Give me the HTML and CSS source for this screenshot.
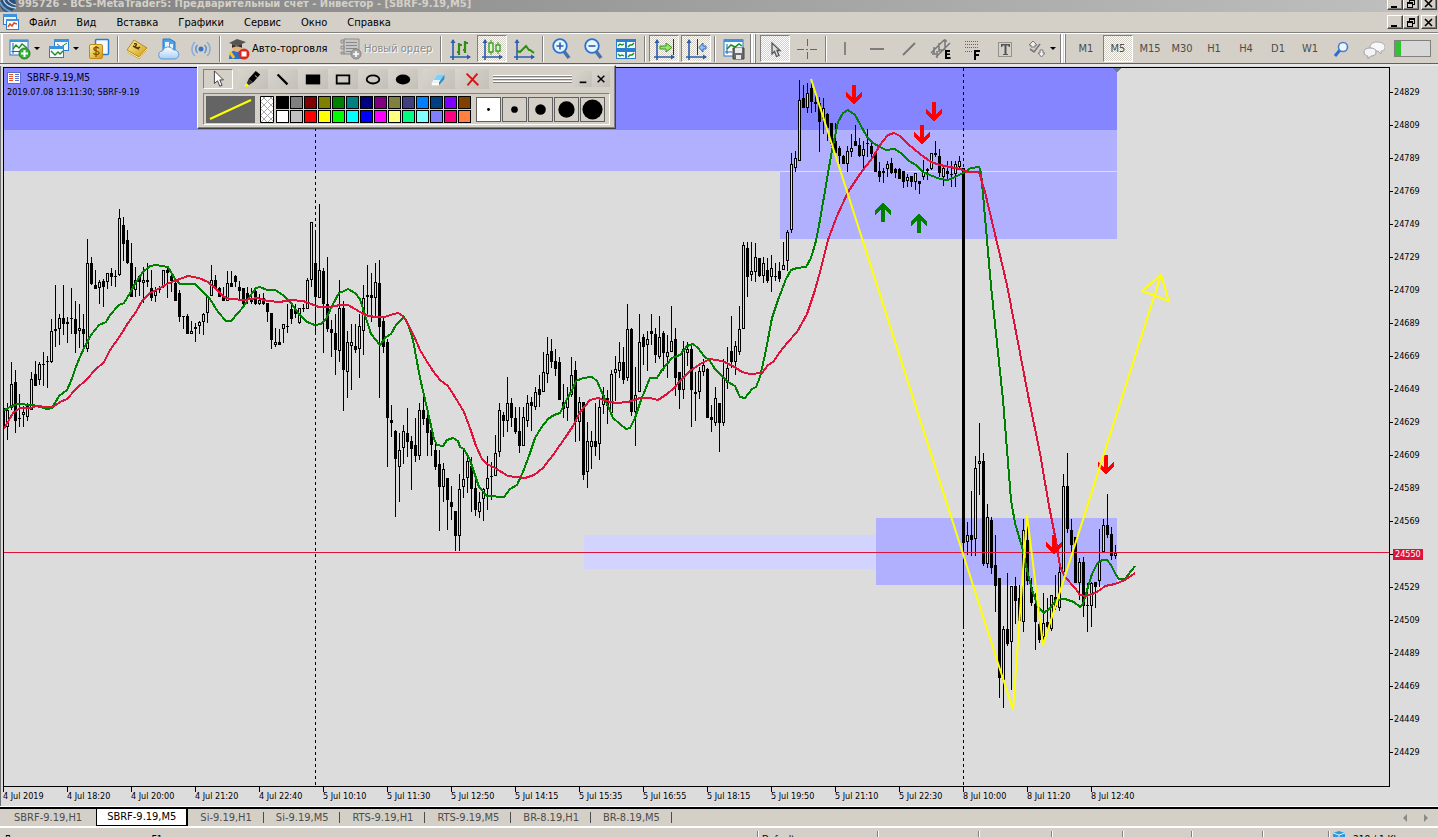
FILE: index.html
```html
<!DOCTYPE html>
<html lang="ru">
<head>
<meta charset="utf-8">
<title>BCS-MetaTrader5</title>
<link rel="stylesheet" href="styles.css">
</head>
<body>
<svg class="defs" aria-hidden="true">
  <defs>
    <linearGradient id="gold" x1="0" y1="0" x2="1" y2="1"><stop offset="0" stop-color="#fff0a0"/><stop offset="1" stop-color="#d09a10"/></linearGradient>
    <linearGradient id="cloud" x1="0" y1="0" x2="0" y2="1"><stop offset="0" stop-color="#fff"/><stop offset="1" stop-color="#a8cdf5"/></linearGradient>
    <g id="axes"><path d="M4 2v20M1 19h20" stroke="#2a5cb0" stroke-width="1.6" fill="none"/><path d="M1.500 5 4 1l2.500 4zM18 16.500l4 2.500-4 2.500z" fill="#2a5cb0"/></g>
    <path id="down" d="M-2-9H2V3L8-2V3L0 10-8 3V-2L-2 3z"/>
  </defs>
</svg>

<header class="titlebar">
  <svg class="app-logo" viewBox="0 0 16 16"><circle cx="8" cy="8" r="8" fill="#2d4f78"/><path d="M3 0c0 6 4 11 13 12M7 0c0 4 3 8 9 9" stroke="#b9d4ea" stroke-width="1.400" fill="none"/><path d="M0 6c2 5 6 8 11 10" stroke="#6c9cc8" stroke-width="2" fill="none"/></svg>
  <h1>995726 - BCS-MetaTrader5: Предварительный счет - Инвестор - [SBRF-9.19,M5]</h1>
  <div class="win-buttons">
    <button aria-label="Свернуть"><svg viewBox="0 0 12 11"><path d="M2 9h6" stroke="#000" stroke-width="2"/></svg></button>
    <button aria-label="Восстановить"><svg viewBox="0 0 12 11" shape-rendering="crispEdges"><path d="M4.500 4V1.500h5v5H8M2.500 4.500h5v5h-5zM3 5.500h4M5 2.500h4" stroke="#000" fill="none"/></svg></button>
    <button class="close" aria-label="Закрыть"><svg viewBox="0 0 12 11"><path d="M2 2l7 7M9 2 2 9" stroke="#000" stroke-width="1.600"/></svg></button>
  </div>
</header>

<nav class="menubar">
  <svg class="menu-logo" viewBox="0 0 16 16"><rect x=".5" y=".5" width="13" height="10" fill="#eaf5ff" stroke="#2b7ccc"/><path d="M0 0h14v3H0z" fill="#3a93dc"/><rect x="3.500" y="5.500" width="12" height="10" fill="#fff" stroke="#2b7ccc"/><path d="M3 5h13v2H3z" fill="#3a93dc"/><path d="M5 13l2-3 2 2 2-3 3 1" stroke="#e04a20" stroke-width="1.500" fill="none"/></svg>
  <a href="#">Файл</a><a href="#">Вид</a><a href="#">Вставка</a><a href="#">Графики</a><a href="#">Сервис</a><a href="#">Окно</a><a href="#">Справка</a>
  <div class="win-buttons">
    <button aria-label="Свернуть график"><svg viewBox="0 0 12 11"><path d="M2 9h6" stroke="#000" stroke-width="2"/></svg></button>
    <button aria-label="Восстановить график"><svg viewBox="0 0 12 11" shape-rendering="crispEdges"><path d="M4.500 4V1.500h5v5H8M2.500 4.500h5v5h-5zM3 5.500h4M5 2.500h4" stroke="#000" fill="none"/></svg></button>
    <button class="close" aria-label="Закрыть график"><svg viewBox="0 0 12 11"><path d="M2 2l7 7M9 2 2 9" stroke="#000" stroke-width="1.600"/></svg></button>
  </div>
</nav>

<div class="toolbar" role="toolbar">
  <button class="tool drop" aria-label="Новый график"><svg viewBox="0 0 22 22"><rect x="1" y="2" width="18" height="15" fill="#f4faff" stroke="#2b7ccc"/><path d="M1 2h18v2H1z" fill="#3a93dc"/><path d="M4 5v11M2.500 13.500h14" stroke="#2a5cb0"/><path d="M4 11l3-4 3 3 3-4 5 4" stroke="#1e8a1e" stroke-width="1.300" fill="none"/><circle cx="15.500" cy="15.500" r="5.500" fill="#35b035" stroke="#1e7d1e"/><path d="M15.500 12v7M12 15.500h7" stroke="#fff" stroke-width="2"/></svg><i class="caret"></i></button>
  <button class="tool drop" aria-label="Профили"><svg viewBox="0 0 22 22"><rect x="6.500" y="1.500" width="14" height="11" fill="#f4faff" stroke="#2b7ccc"/><path d="M6 1h15v3H6z" fill="#3a93dc"/><path d="M9 6l4 3 6-4" stroke="#1e8a1e" fill="none"/><rect x="1.500" y="8.500" width="14" height="11" fill="#f4faff" stroke="#2b7ccc"/><path d="M1 8h15v3H1z" fill="#3a93dc"/><path d="M3 13l4 4 3-3 2 2 3-3" stroke="#1e8a1e" stroke-width="1.300" fill="none"/></svg><i class="caret"></i></button>
  <button class="tool" aria-label="Обзор рынка"><svg viewBox="0 0 22 22"><rect x="7.500" y="1.500" width="13" height="15" rx="1" fill="#f4faff" stroke="#2b7ccc" stroke-width="1.500"/><rect x="1.500" y="6.500" width="13" height="14" rx="1.500" fill="url(#gold)" stroke="#c48a10"/><path d="M11 10.500c-1-2-6-1.500-5 1 .5 1.500 4.500 1.500 5 3 .5 2.500-4.500 3-5.500.5M8 8v11" stroke="#8a5200" stroke-width="1.300" fill="none"/></svg></button>
  <i class="sep"></i>
  <button class="tool" aria-label="Окно данных"><svg viewBox="0 0 22 22"><path d="M1 12 8 2l13 8-8 9z" fill="url(#gold)" stroke="#a87808" stroke-width=".8"/><path d="M1 12v2l12 7 8-9v-2l-8 9z" fill="#b8860b"/><path d="M1 13l12 7 8-9" stroke="#fff3bd" fill="none"/><path d="M8 6c2-1 3 0 2 1.500S9 10 11 10s3-1 3-1M7 8l6 3" stroke="#553a00" stroke-width="1.400" fill="none"/></svg></button>
  <button class="tool" aria-label="Облако"><svg viewBox="0 0 22 22"><path d="M5 1h7l5 3v9H5z" fill="#4ba3e6" stroke="#2b7ccc"/><path d="M7 4h4v8H7zM12 6h3v6h-3z" fill="#e7f4ff"/><path d="M5 21a4 4 0 0 1-.5-8 6 6 0 0 1 11-1A4.500 4.500 0 0 1 17 21z" fill="url(#cloud)" stroke="#5d98d6"/></svg></button>
  <button class="tool" aria-label="Сигналы"><svg viewBox="0 0 22 22"><circle cx="11" cy="11" r="2.500" fill="#3b73c4"/><path d="M7.500 7a5.500 5.500 0 0 0 0 8M14.500 7a5.500 5.500 0 0 1 0 8" stroke="#5c8fd0" stroke-width="1.500" fill="none"/><path d="M5 4a9.500 9.500 0 0 0 0 14M17 4a9.500 9.500 0 0 1 0 14" stroke="#8aaed8" stroke-width="1.500" fill="none"/></svg></button>
  <i class="sep"></i>
  <button class="tool wide auto"><svg viewBox="0 0 22 22"><path d="M1 21c0-6 3-9 8-9s8 4 8 9z" fill="#2f6fc4"/><circle cx="9" cy="9" r="5" fill="#e6b27c"/><path d="M1 5l8-4 9 3-8 4z" fill="#555"/><path d="M4 6v4c3-2 7-2 10 0V6l-5 2z" fill="#333"/><path d="M2 14l4 6" stroke="#f2c230" stroke-width="3"/><circle cx="16" cy="16" r="5.500" fill="#dc2a1c"/><rect x="13.500" y="13.500" width="5" height="5" fill="#fff"/></svg>Авто-торговля</button>
  <button class="tool wide order" disabled><svg viewBox="0 0 22 22"><path d="M4 1h15v15H4zM1 2h3v3H1zM1 8h3v3H1zM1 14h3v2H1z" fill="#c7c7c7" stroke="#8c8c8c"/><path d="M6 4.500h11M6 7.500h11M6 10.500h11M6 13.500h6" stroke="#888"/><circle cx="16" cy="16" r="5" fill="#a4a4a4" stroke="#858585"/><path d="M16 13v6M13 16h6" stroke="#fff" stroke-width="1.600"/></svg>Новый ордер</button>
  <i class="sep"></i>
  <button class="tool" aria-label="Бары"><svg viewBox="0 0 22 22"><use href="#axes"/><path d="M10 5v12M16 3v12M8 14h2M10 7h3M14 12h2M16 5h3" stroke="#2f8f10" stroke-width="2.200" fill="none"/></svg></button>
  <button class="tool pressed" aria-label="Свечи"><svg viewBox="0 0 22 22"><use href="#axes"/><path d="M10 2v15M17 4v12" stroke="#2f9a10"/><rect x="8" y="5" width="4" height="9" fill="#e6f8dc" stroke="#2f9a10" stroke-width="1.300"/><rect x="15" y="7" width="4" height="6" fill="#e6f8dc" stroke="#2f9a10" stroke-width="1.300"/></svg></button>
  <button class="tool" aria-label="Линия"><svg viewBox="0 0 22 22"><use href="#axes"/><path d="M4 13l3 1 6-6 3 4 1 0 4 3" stroke="#2f8f10" stroke-width="2" fill="none"/></svg></button>
  <i class="sep"></i>
  <button class="tool" aria-label="Увеличить"><svg viewBox="0 0 22 22"><path d="M12 12l6 8" stroke="#4c6fa8" stroke-width="3.600"/><circle cx="9" cy="8" r="6.800" fill="#e8f5ff" stroke="#2a74c8" stroke-width="1.800"/><path d="M9 4.500v7M5.500 8h7" stroke="#2a5cb0" stroke-width="1.600"/></svg></button>
  <button class="tool" aria-label="Уменьшить"><svg viewBox="0 0 22 22"><path d="M12 12l6 8" stroke="#4c6fa8" stroke-width="3.600"/><circle cx="9" cy="8" r="6.800" fill="#e8f5ff" stroke="#2a74c8" stroke-width="1.800"/><path d="M5.500 8h7" stroke="#2a5cb0" stroke-width="1.600"/></svg></button>
  <button class="tool" aria-label="Плитка"><svg viewBox="0 0 22 22"><path d="M1 1h20v20H1z" fill="#2b7fd0"/><path d="M2 4h8v6H2zM12 4h8v6h-8zM2 14h8v6H2zM12 14h8v6h-8z" fill="#f2faff"/><path d="M3 8l2-2 2 1 2-1M13 9l2-2 2 0 2-2M3 16l2 2 2-1 2 1M13 19l2-2 2 0 2-2" stroke="#1e8a1e" stroke-width="1.300" fill="none"/></svg></button>
  <i class="sep"></i>
  <button class="tool pressed" aria-label="Автопрокрутка"><svg viewBox="0 0 22 22"><use href="#axes"/><path d="M20.500 1v16" stroke="#333"/><path d="M7 8h6V5l6 4.500-6 4.500v-3H7z" fill="#9be07a" stroke="#2f9a10"/></svg></button>
  <button class="tool pressed" aria-label="Сдвиг графика"><svg viewBox="0 0 22 22"><use href="#axes"/><path d="M12.500 1v16" stroke="#333"/><path d="M21 8h-3V5l-4 4.500 4 4.500v-3h3z" fill="#8fc1f5" stroke="#2a6cc8"/></svg></button>
  <i class="sep"></i>
  <button class="tool" aria-label="Шаблоны"><svg viewBox="0 0 22 22"><rect x="1" y="2" width="19" height="16" fill="#f4faff" stroke="#2b7ccc"/><path d="M1 1h19v3H1z" fill="#3a93dc"/><path d="M4 6v10M2 14h7" stroke="#2a5cb0"/><path d="M4 11l4-4 4 2 4-3 3 2" stroke="#1e8a1e" stroke-width="1.500" fill="none"/><path d="M10 10h11v11H10z" fill="#6b6b6b" stroke="#444"/><path d="M12 10h7v5h-7zM13 17h5v4h-5z" fill="#e9e9e9"/></svg></button>
  <i class="grip"></i>
  <button class="tool pressed" aria-label="Курсор"><svg viewBox="0 0 22 22"><path d="M8 5v11l2.500-2.500 2 5 2.500-1-2-5H16z" fill="#ddd" stroke="#555" stroke-width="1.300"/></svg></button>
  <button class="tool" aria-label="Перекрестие"><svg viewBox="0 0 22 22" shape-rendering="crispEdges"><path d="M11 1v7M11 14v7M1 11h7M14 11h7M10 11h2" stroke="#666" stroke-width="1"/></svg></button>
  <i class="sep"></i>
  <button class="tool" aria-label="Вертикальная линия"><svg viewBox="0 0 22 22"><path d="M11 4v13" stroke="#666" stroke-width="1.400"/></svg></button>
  <button class="tool" aria-label="Горизонтальная линия"><svg viewBox="0 0 22 22"><path d="M4 11h14" stroke="#666" stroke-width="1.600"/></svg></button>
  <button class="tool" aria-label="Трендовая линия"><svg viewBox="0 0 22 22"><path d="M5 17 17 5" stroke="#777" stroke-width="1.800"/></svg></button>
  <button class="tool" aria-label="Каналы"><svg viewBox="0 0 22 22"><path d="M1 15 14 2M6 19 20 5M4 9v7M2 16h4M9 5v9M9 12h5M15 1v11M13 3h4M7 13v7" stroke="#777" stroke-width="1.500" fill="none"/><path d="M15 12h5v2h-3v1.500h3v1.500h-3v2h3.500v2H15z" fill="#000"/></svg></button>
  <button class="tool" aria-label="Фибоначчи"><svg viewBox="0 0 22 22" shape-rendering="crispEdges"><path d="M3 3.500h13M3 6.500h13M3 9.500h13M3 13.500h8" stroke="#666" stroke-width="1" stroke-dasharray="1 1"/><path d="M12 12h6v2h-4v2h3v2h-3v4h-2z" fill="#000"/></svg></button>
  <button class="tool" aria-label="Текст"><svg viewBox="0 0 22 22"><rect x="4.500" y="4.500" width="13" height="14" fill="none" stroke="#555" stroke-dasharray="1 1"/><path d="M7 6h9v3h-1l-1-1.500h-1.500V16H14v1H9v-1h1.500V7.500H9L8 9H7z" fill="#555"/></svg></button>
  <button class="tool drop" aria-label="Фигуры"><svg viewBox="0 0 22 22"><path d="M4 7l4-4 4 4h-2v2H6V7zM13 15h2v-3h3v3h2l-3.500 4z" fill="#eee" stroke="#777"/><path d="M5 11l4 3 6-8" stroke="#777" stroke-width="1.600" fill="none"/></svg><i class="caret"></i></button>
  <i class="grip far"></i>
  <button class="tool tf">M1</button><button class="tool tf pressed">M5</button><button class="tool tf">M15</button><button class="tool tf">M30</button><button class="tool tf">H1</button><button class="tool tf">H4</button><button class="tool tf">D1</button><button class="tool tf">W1</button>
  <button class="tool" aria-label="Поиск"><svg viewBox="0 0 22 22"><path d="M9 12l-5 6" stroke="#2a6cd0" stroke-width="3"/><circle cx="12" cy="9" r="4.500" fill="#eef6ff" stroke="#4a7cd0" stroke-width="1.600"/></svg></button>
  <button class="tool" aria-label="Чат"><svg viewBox="0 0 22 22"><path d="M14 4c5 0 8 2 8 5s-2 4-4 4l0 3-3-3c-5 0-8-1-8-4s3-5 7-5z" fill="#f8f8fa" stroke="#a9a9ae"/><path d="M7 10c4 0 6 1 6 4s-2 4-5 4l-3 3v-3c-2 0-4-1-4-4s3-4 6-4z" fill="#f4f4f6" stroke="#a0a0a6"/></svg></button>
  <div class="signal"><i></i></div>
</div>

<main class="chart">
  <div class="plot">
    <svg id="price-plot" viewBox="4 68 1385 718" preserveAspectRatio="none" shape-rendering="crispEdges">
      <path fill="#8585ff" d="M4 68h1113v62H4z"/>
      <path fill="#b0b0ff" d="M4 130h1113v41H4zM780 171h337v68H780zM876 518h241v67H876z"/>
      <path fill="#d3d3ff" d="M584 535h292v34H584z"/>
      <path fill="#dcdcff" d="M780 171h337v1H780z"/>
      <path fill="#708090" d="M1112 68h9l-4 4z"/>
      <path class="day" d="M315.500 68V786M963.500 68V786"/>
      <path id="wicks" class="wick"/><path id="filled"/><path id="hollow" class="hollow"/>
      <path fill="#000" d="M962 168h3v375h-3zM963 543h1v84h-1z"/>
      <path class="level" d="M4 552.500H1389"/>
      <polyline class="ma fast" points="3,411 10,407 17,404 33,405 40,407 47,409 52,408 59,396 67,390 71,381 77,364 84,348 91,335 99,325 106,322 110,315 119,305 124,303 130,293 136,282 143,272 150,266 156,265 168,267 175,279 180,284 195,284 202,291 210,299 218,312 226,321 231,321 238,313 244,306 250,296 256,288 260,287 267,290 275,290 283,295 291,303 299,314 307,322 315,325 321,324 326,319 332,306 339,293 344,291 348,289 355,293 360,299 364,312 371,334 380,345 386,337 391,334 396,325 404,317 408,324 413,340 420,378 427,408 434,439 437,445 443,446 447,440 453,438 458,441 460,447 464,449 470,460 475,475 479,487 487,496 504,497 510,489 517,485 523,472 529,456 535,438 541,428 548,419 554,415 560,413 566,401 572,390 576,381 583,378 592,377 597,381 603,395 608,406 613,418 620,424 626,429 630,428 635,418 641,400 650,378 657,378 662,370 672,358 680,355 687,346 693,344 698,348 704,356 710,361 715,369 722,376 728,382 735,386 740,397 745,398 752,389 756,387 760,377 766,350 772,318 778,300 786,279 791,270 797,268 806,267 811,258 816,241 820,220 826,185 832,150 838,122 843,113 848,110 855,115 860,124 867,137 873,143 880,147 886,150 895,149 902,154 909,161 916,165 923,172 930,175 940,179 948,180 955,177 963,173 971,168 979,167 981,172 987,240 991,286 1003,400 1011,500 1015,523 1022,547 1027,570 1032,590 1038,607 1044,613 1050,608 1056,600 1065,599 1074,602 1080,607 1083,604 1087,590 1092,574 1097,564 1102,560 1107,560 1111,565 1116,575 1119,579 1125,579 1135,566"/>
      <polyline class="ma slow" points="3,430 9,420 13,413 20,408 30,408 37,406 46,407 53,407 60,402 67,399 75,390 87,379 95,370 104,362 110,350 120,336 128,323 136,312 142,301 150,293 160,288 167,284 177,280 188,276 199,278 208,282 216,289 224,297 230,299 245,300 257,298 268,301 280,302 290,300 303,301 311,304 319,307 330,307 340,305 348,305 355,309 365,315 375,317 385,317 390,315 398,313 403,316 409,326 414,336 420,350 426,360 433,371 440,380 448,386 455,397 464,412 470,428 476,446 482,459 487,464 495,468 508,476 525,478 534,475 543,468 553,455 565,438 573,426 580,412 590,400 598,398 606,401 616,403 628,402 640,398 650,398 658,400 667,394 674,388 681,380 690,371 700,364 710,359 722,361 733,366 742,372 750,374 762,373 768,365 773,362 780,352 788,342 797,332 807,314 815,290 820,272 828,240 837,216 848,192 860,174 873,157 880,145 888,135 894,133 900,136 908,144 920,154 931,162 940,165 950,167 960,169 968,172 979,172 985,192 1007,285 1029,400 1040,453 1049,506 1056,541 1060,566 1065,577 1075,588 1080,595 1086,596 1095,593 1100,590 1105,586 1115,584 1125,580 1135,573"/>
      <g fill="#f00"><use href="#down" x="854" y="94"/><use href="#down" x="922" y="134"/><use href="#down" x="934" y="111"/><use href="#down" x="1106" y="464"/><use href="#down" x="1054" y="544"/></g>
      <g fill="#008000"><use href="#down" transform="translate(883 213) scale(1 -1)"/><use href="#down" transform="translate(919 224) scale(1 -1)"/></g>
      <path class="zigzag" shape-rendering="geometricPrecision" d="M811 79 1013 710 1027 515 1043 645 1161 275M1161 275 1142 291 1169 301z"/>
    </svg>
    <div class="caption">
      <p><svg viewBox="0 0 14 12"><rect x=".5" y=".5" width="13" height="11" fill="#fff" stroke="#5a6fc0"/><path d="M2 2.500h4M2 4.500h4M2 6.500h4M2 8.500h4" stroke="#e05030"/><path d="M8 2.500h4M8 4.500h4M8 6.500h4M8 8.500h4" stroke="#5a6fd0"/></svg>SBRF-9.19,M5</p>
      <p class="stamp">2019.07.08 13:11:30; SBRF-9.19</p>
    </div>
  </div>
  <ol class="prices" id="prices"></ol>
  <ol class="times" id="times"></ol>
</main>

<nav class="tabs">
  <a href="#" class="first">SBRF-9.19,H1</a><a href="#" class="active">SBRF-9.19,M5</a><a href="#">Si-9.19,H1</a><a href="#">Si-9.19,M5</a><a href="#">RTS-9.19,H1</a><a href="#">RTS-9.19,M5</a><a href="#">BR-8.19,H1</a><a href="#">BR-8.19,M5</a>
  <div class="scrollers"><button aria-label="Назад"><svg viewBox="0 0 4 8"><path d="M4 0v8L0 4z" fill="#8c8984"/></svg></button><button aria-label="Вперед"><svg viewBox="0 0 4 8"><path d="M0 0v8l4-4z" fill="#8c8984"/></svg></button></div>
</nav>

<footer class="status">
  <span class="help">Для вызова справки, нажмите F1</span><span>Default</span><span></span><span></span><span></span><span></span><span></span><span></span><span class="net"><svg viewBox="0 0 12 12"><path d="M0 2l6-2 6 2v8l-6 2-6-2z" fill="#2a9be0"/><path d="M0 2l6 2 6-2M6 4v8" stroke="#d5f0ff" fill="none"/></svg>218 / 1 Kb</span>
</footer>

<section class="palette" aria-label="Рисование">
  <div class="palette-top">
    <button class="on" aria-label="Указатель"><svg viewBox="0 0 20 20"><path d="M6 1v14l3.500-3 2.500 6 2.500-1-2.500-6H16z" fill="#fff" stroke="#333"/></svg></button>
    <button aria-label="Маркер"><svg viewBox="0 0 20 20"><path d="M13 1l5 4-8 9-5-4z"/><path d="M5 10l5 4-5 3-2-2z" fill="#333"/><path d="M12 6l3 2.500" stroke="#ddd"/><circle cx="3" cy="17" r="2" fill="#ff0"/></svg></button>
    <button aria-label="Линия"><svg viewBox="0 0 20 20"><path d="M4 5l11 11" stroke="#000" stroke-width="2.500"/></svg></button>
    <button aria-label="Закрашенный прямоугольник"><svg viewBox="0 0 20 20"><path d="M2 5h16v11H2z"/></svg></button>
    <button aria-label="Прямоугольник"><svg viewBox="0 0 20 20"><path d="M3 6h14v9H3z" fill="none" stroke="#000" stroke-width="2"/></svg></button>
    <button aria-label="Эллипс"><svg viewBox="0 0 20 20"><ellipse cx="10" cy="10.500" rx="7" ry="4.500" fill="none" stroke="#000" stroke-width="2"/></svg></button>
    <button aria-label="Закрашенный эллипс"><svg viewBox="0 0 20 20"><ellipse cx="10" cy="10.500" rx="8" ry="5.500"/></svg></button>
    <button class="apart" aria-label="Ластик"><svg viewBox="0 0 20 20"><path d="M8 5h8l-6 9H2z" fill="#e8f7ff"/><path d="M8 5h8l-4 6H4z" fill="#7fd0f5"/><path d="M16 5v5l-6 7v-3z" fill="#2b8ec8"/><path d="M2 14h8v3H2z" fill="#fff"/></svg></button>
    <button aria-label="Очистить"><svg viewBox="0 0 20 20"><path d="M4 4l13 13M16 4 5 17" stroke="#d01818" stroke-width="2.200"/></svg></button>
    <i class="rails"></i>
    <button class="small" aria-label="Свернуть панель"><svg viewBox="0 0 12 12"><path d="M2 10h8" stroke="#000" stroke-width="2"/></svg></button>
    <button class="small" aria-label="Закрыть панель"><svg viewBox="0 0 12 12"><path d="M2 2l8 8M10 2l-8 8" stroke="#000" stroke-width="1.800"/></svg></button>
  </div>
  <div class="palette-body">
    <svg class="sample" viewBox="0 0 49 27"><path d="M0 0h49v27H0z" fill="#646464"/><path d="M4 23 45 4" stroke="#ff0" stroke-width="2"/></svg>
    <svg class="hatch" viewBox="0 0 14 27"><path d="M.5.500h13v26H.5z" fill="#fff" stroke="#000"/><path d="M1 5l4-4M1 12l11-11M1 19l12-12M1 26l12-12M8 26l5-5M1 20l6 6M1 13l12 12M1 6l12 12M3 1l10 10M10 1l3 3" stroke="#aaa" fill="none"/></svg>
    <div class="swatches" id="swatches"></div>
    <div class="sizes">
      <button class="chosen" aria-label="Толщина 1"><svg viewBox="0 0 24 24"><circle cx="12" cy="12" r="1.500"/></svg></button>
      <button aria-label="Толщина 2"><svg viewBox="0 0 24 24"><circle cx="12" cy="12" r="3.500"/></svg></button>
      <button aria-label="Толщина 3"><svg viewBox="0 0 24 24"><circle cx="12" cy="12" r="5.500"/></svg></button>
      <button aria-label="Толщина 4"><svg viewBox="0 0 24 24"><circle cx="12" cy="12" r="8.500"/></svg></button>
      <button aria-label="Толщина 5"><svg viewBox="0 0 24 24"><circle cx="12" cy="12" r="10.500"/></svg></button>
    </div>
  </div>
</section>
<script src="chart.js"></script>
</body>
</html>
```
FILE: styles.css
```css
* { box-sizing: border-box; }
body {
  margin: 0; height: 100vh; overflow: hidden; position: relative;
  display: flex; flex-direction: column;
  background: #d4d0c8; color: #000;
  font: 11px/14px "DejaVu Sans Condensed", "DejaVu Sans", sans-serif;
}
button { font: inherit; color: inherit; padding: 0; margin: 0; border: 0; background: none; display: flex; align-items: center; justify-content: center; }
a { color: inherit; text-decoration: none; }
svg { display: block; }
ol, p, h1 { margin: 0; padding: 0; list-style: none; }
.defs { position: absolute; width: 0; height: 0; }

.titlebar { flex: none; height: 12px; overflow: hidden; display: flex; align-items: flex-end; padding-right: 1px; background: linear-gradient(90deg, #808080, #c0c0c0); color: #d4d0c8; }
.titlebar h1 { font-size: 11px; line-height: 16px; font-weight: bold; white-space: nowrap; margin-left: 2px; }
.app-logo { width: 16px; height: 16px; flex: none; }
.win-buttons { display: flex; margin-left: auto; }
.win-buttons button { width: 16px; height: 14px; background: #d4d0c8; border: 1px solid; border-color: #fff #404040 #404040 #fff; box-shadow: inset -1px -1px #808080; }
.win-buttons svg { width: 12px; height: 11px; }
.win-buttons .close { margin-left: 2px; }
.titlebar .win-buttons { margin-bottom: 2px; }

.menubar { flex: none; height: 21px; display: flex; align-items: center; padding: 0 1px 0 3px; border-bottom: 1px solid #808080; }
.menu-logo { width: 16px; height: 16px; flex: none; }
.menubar a { padding: 1px 10px 0; }

.toolbar { flex: none; height: 31px; display: flex; align-items: center; padding-left: 5px; border-top: 1px solid #fff; border-bottom: 1px solid #808080; box-shadow: inset 1px 0 #d4d0c8, inset 3px 0 #fff; }
.tool { flex: none; width: 32px; height: 28px; }
.tool svg { width: 22px; height: 22px; flex: none; }
.tool.drop { width: 39px; }
.tool.drop svg { margin-right: 3px; }
.caret { border: 3px solid transparent; border-top-color: #000; border-bottom: 0; }
.tool.wide { gap: 2px; justify-content: flex-start; padding-left: 5px; white-space: nowrap; }
.tool.auto { width: 112px; }
.tool.order { width: 103px; color: #8c8984; text-shadow: 1px 1px #fff; }
.tool.pressed { width: 30px; height: 27px; margin: 0 1px; border: 1px solid; border-color: #808080 #fff #fff #808080; background: repeating-conic-gradient(#fff 0 25%, #d4d0c8 0 50%) 0 0 / 2px 2px; }
.tf { color: #4c4c4c; }
.sep { flex: none; width: 6px; height: 26px; background: linear-gradient(90deg, #808080 50%, #fff 50%) 2px 0 / 2px 100% no-repeat; }
.grip { flex: none; width: 9px; height: 30px; border-left: 1px solid #808080; box-shadow: inset 2px 0 #fff; background: linear-gradient(90deg, #fff 50%, #808080 50%) 3px 0 / 2px 100% no-repeat; }
.grip.far { width: 10px; }
.signal { flex: 1; max-width: 37px; height: 17px; margin-left: 4px; border: 1px solid #808080; background: #d8d8d8; }
.signal i { display: block; width: 6px; height: 100%; background: #32c132; }

.chart { flex: 1; min-height: 0; display: grid; grid-template: minmax(0, 1fr) 20px / minmax(0, 1fr) 48px; background: #dcdcdc; border-top: 2px solid #e8e8e8; box-shadow: inset 1px 0 #707070; padding: 1px 0 0 3px; font-size: 9px; line-height: 11px; outline: 1px solid #606060; }
.plot { position: relative; border: 1px solid #000; }
.plot > svg { width: 100%; height: 100%; position: absolute; }
.caption { position: absolute; left: 3px; top: 2px; font-size: 10px; line-height: 15px; }
.caption p { display: flex; align-items: center; white-space: nowrap; }
.caption .stamp { font-size: 9px; }
.caption svg { width: 14px; height: 12px; margin-right: 6px; }
.day { stroke: #000; stroke-dasharray: 3 3; }
.wick { stroke: #000; }
.hollow { stroke: #000; fill: #dcdcdc; }
.level { stroke: #dc143c; }
.ma { fill: none; stroke-width: 2; }
.fast { stroke: #008000; }
.slow { stroke: #dc143c; }
.zigzag { fill: none; stroke: #ff0; stroke-width: 2; }
.prices { display: flex; flex-direction: column; padding: 9px 0 18px; }
.prices li { flex: 1; display: flex; align-items: center; white-space: nowrap; }
.prices li::before { content: ""; width: 3px; height: 1px; background: #000; margin-right: 1px; }
.prices .last span { background: #dc143c; color: #fff; padding: 0 2px; margin-left: -1px; }
.times { grid-column: 1 / -1; display: flex; }
.times li { flex: 0 0 64px; padding-top: 4px; white-space: nowrap; background: linear-gradient(#000, #000) 0 0 / 1px 5px no-repeat; }

.tabs { flex: none; height: 20px; display: flex; border-top: 2px solid #000; border-bottom: 1px solid #fff; outline: 1px solid #fff; line-height: 17px; color: #4c4c4c; }
.tabs a { padding: 0 12px; position: relative; white-space: nowrap; }
.tabs a::after { content: ""; position: absolute; right: 0; top: 3px; height: 11px; width: 1px; background: #4c4c4c; }
.tabs .first { padding: 0 14px; }
.tabs .first::after, .tabs .active::after { display: none; }
.tabs .active { height: 17px; line-height: 16px; background: #fff; color: #000; border: solid #000; border-width: 0 2px 1px 1px; padding: 0 10px; }
.scrollers { display: flex; gap: 17px; margin-left: auto; padding: 3px 10px 0 0; height: 14px; }
.scrollers svg { width: 4px; height: 8px; }

.status { flex: none; height: 9px; margin-top: 1px; overflow: hidden; display: grid; grid-template-columns: 757fr 120fr 101fr 73fr 71fr 69fr 71fr 66fr 110fr; line-height: 12px; padding-top: 3px; font-size: 10px; }
.status span { min-width: 0; border-left: 1px solid #808080; box-shadow: inset 1px 0 #fff; padding: 3px 0 0 4px; white-space: nowrap; height: 15px; }
.status .help { border: 0; box-shadow: none; }
.status .net { display: flex; gap: 8px; }
.status .net svg { width: 12px; height: 12px; margin-top: -3px; flex: none; }

.palette { position: absolute; left: 197px; top: 65px; padding: 3px 5px 3px; background: #d4d0c8; border: 1px solid; border-color: #fff #404040 #404040 #fff; box-shadow: inset -1px -1px #808080; }
.palette-top { display: flex; align-items: flex-start; height: 24px; }
.palette-top button { width: 30px; height: 20px; background: linear-gradient(135deg, #d8d5ce, #c4c0b8); }
.palette-top button.on { margin-right: 5px; background: #d4d0c8; border: 1px solid; border-color: #808080 #fff #fff #808080; }
.palette-top svg { width: 18px; height: 18px; }
.palette-top .apart { margin-left: 5px; width: 32px; }
.palette-top .apart + button { width: 34px; }
.rails { flex: 1; height: 8px; margin: 6px 2px 0 4px; background: repeating-linear-gradient(#fff 0 1px, #808080 1px 2px, #d4d0c8 2px 3px); }
.palette-top .small { width: 18px; height: 16px; margin-top: 2px; }
.palette-top .small svg { width: 10px; height: 10px; }
.palette-body { display: flex; align-items: center; padding: 2px 4px 2px 2px; height: 32px; border: 1px solid; border-color: #808080 #fff #fff #808080; }
.sample { width: 49px; height: 27px; }
.hatch { width: 14px; height: 27px; margin: 0 2px 0 5px; }
.swatches { display: grid; grid-template-columns: repeat(14, 13px); gap: 1px; }
.swatches button { width: 13px; height: 13px; border: 1px solid #000; }
.sizes { display: flex; gap: 1px; margin-left: 5px; }
.sizes button { width: 25px; height: 25px; border: 1px solid #606060; }
.sizes .chosen { background: #fff; }
.sizes svg { width: 23px; height: 23px; }
```
FILE: chart.js
```js
// One entry per bar: high, body top, body bottom, low, kind (f = falling, h = rising).
const bars = `403 408 427 432 h|403 410 427 440 h|362 384 408 410 h|370 382 421 433 f|394 418 419 427 f|406 412 415 427 h|403 406 417 421 h|372 379 410 410 h|361 374 386 386 f|362 364 380 385 h|352 364 365 386 f|356 361 362 388 f|319 331 362 363 h|285 329 331 347 h|314 318 329 345 h|285 318 324 335 f|317 322 324 343 h|288 318 319 334 f|301 319 334 353 f|304 328 331 348 h|314 329 334 351 f|239 263 349 352 h|257 263 284 285 f|270 285 289 289 f|280 282 288 304 h|279 281 287 307 f|273 273 282 289 h|268 273 277 286 f|270 276 277 287 f|209 218 275 276 h|217 225 244 261 f|230 240 263 264 f|243 263 297 297 f|267 280 290 297 h|275 276 282 296 f|267 280 283 303 h|263 280 282 287 f|270 288 298 301 f|287 291 296 302 h|286 288 290 293 h|270 270 287 288 h|268 270 273 298 f|275 276 281 292 f|282 283 301 301 f|290 293 317 322 f|316 316 317 329 f|314 316 334 334 f|321 331 334 334 h|323 327 329 342 h|321 322 326 334 h|313 314 322 335 h|295 296 313 323 h|265 280 296 296 h|275 280 288 289 f|287 288 297 297 f|287 296 301 301 f|271 283 301 301 h|271 283 287 287 f|275 276 282 287 f|281 287 291 299 f|288 288 304 305 f|287 293 299 304 f|288 298 302 304 f|288 291 304 305 f|294 300 304 305 h|293 298 304 305 f|303 303 312 322 f|313 313 340 349 f|328 342 345 347 h|329 342 345 345 f|324 324 329 343 h|304 326 327 333 f|304 309 319 324 f|304 309 314 318 f|308 308 323 324 h|304 308 309 312 f|278 280 309 309 h|222 222 280 287 h|233 263 297 333 f|204 270 298 298 h|268 271 304 353 f|257 304 329 332 f|320 329 333 357 f|314 333 350 375 f|280 308 351 362 h|301 308 370 411 f|331 342 372 398 h|324 342 346 390 h|324 346 350 353 f|314 326 349 378 h|285 298 331 355 h|265 295 297 316 f|273 295 298 322 f|263 282 298 317 h|260 283 327 398 f|317 321 347 353 f|339 342 418 467 f|405 420 423 437 f|430 431 459 517 f|433 450 467 502 h|425 431 448 464 h|408 433 442 457 f|436 441 449 490 f|418 445 456 462 f|403 410 456 460 h|393 410 419 425 f|414 418 433 456 f|429 430 445 456 f|443 450 467 470 f|450 464 487 531 f|463 469 487 502 h|478 478 500 530 f|486 502 507 520 f|511 511 536 551 f|474 489 536 551 h|449 479 487 498 h|453 461 478 493 h|457 466 489 512 f|473 488 510 516 f|492 502 512 518 h|488 489 499 521 h|456 478 489 510 h|462 476 477 500 f|435 453 476 476 h|403 410 452 457 h|412 415 421 437 f|377 403 421 432 h|398 403 418 427 f|407 418 432 434 f|407 431 446 453 f|407 417 446 446 h|395 403 421 427 h|397 402 406 431 f|387 392 407 410 h|375 389 395 407 f|352 372 392 392 h|337 354 374 383 h|339 351 362 368 f|349 361 369 376 f|357 362 400 400 f|384 402 409 418 f|387 398 408 421 h|357 375 395 397 h|361 370 422 442 f|397 402 422 441 h|402 402 475 480 f|422 441 472 488 h|431 441 447 469 h|403 441 447 456 f|400 407 444 460 h|387 395 405 414 h|390 398 406 424 f|370 374 413 413 h|356 369 373 401 h|342 362 371 378 h|347 362 380 384 f|304 329 378 381 h|328 329 412 416 f|367 395 412 446 h|314 342 392 392 h|334 337 347 365 f|331 339 345 371 h|314 331 334 345 f|328 334 355 363 f|316 337 357 359 h|331 333 353 371 f|335 352 357 378 h|306 341 352 352 h|328 339 378 396 f|372 372 390 409 f|341 349 390 399 h|342 349 353 366 h|346 349 390 427 f|372 392 394 421 h|367 371 392 399 h|359 365 372 376 h|368 369 418 418 f|405 417 420 432 f|387 398 423 426 h|403 403 423 452 f|359 378 423 426 h|347 368 383 389 h|316 351 362 368 f|341 346 362 375 h|306 329 352 355 h|242 245 329 329 h|242 248 277 297 f|242 271 275 281 h|243 257 272 282 h|258 258 276 277 f|257 263 276 283 h|258 270 281 283 f|255 268 277 292 h|263 276 277 281 f|262 271 279 282 f|242 265 270 270 h|230 232 261 271 h|153 164 230 233 h|151 158 168 172 h|80 100 161 161 h|85 98 108 108 f|83 93 108 113 h|79 88 102 113 f|94 102 104 112 f|97 103 122 152 f|98 108 119 134 h|113 114 128 141 f|123 123 144 147 f|123 141 153 158 f|146 148 156 164 f|155 156 164 164 f|146 151 164 172 h|134 148 152 157 h|125 141 146 146 f|138 145 156 157 f|141 149 156 168 h|129 143 144 157 f|140 146 154 158 f|151 153 172 172 f|162 171 177 182 f|168 171 173 183 f|161 164 169 177 h|158 163 173 174 f|168 169 173 178 f|168 169 179 179 f|171 171 182 188 f|174 177 181 187 h|176 176 182 187 f|173 173 182 190 h|181 181 184 194 f|160 172 177 180 h|168 169 171 180 h|153 153 169 170 h|141 153 155 157 f|149 156 173 177 f|165 168 177 186 h|161 171 174 179 f|161 174 175 187 f|161 164 174 187 h|156 161 167 169 h|168 168 543 627 f|522 535 542 555 h|491 535 540 556 f|456 468 539 556 h|423 461 464 495 h|453 461 564 566 f|504 517 564 568 h|517 520 568 574 f|535 565 586 612 f|578 578 678 698 f|626 629 680 708 h|573 629 644 646 f|586 586 642 690 h|577 586 601 624 f|585 598 621 621 f|519 530 622 632 h|520 540 581 585 f|578 587 603 606 f|593 604 622 650 f|607 624 640 643 f|593 623 637 643 h|598 622 627 631 f|595 595 629 631 h|575 597 607 610 f|562 572 608 611 h|474 486 572 575 h|453 486 529 533 f|519 530 545 552 f|537 537 583 583 f|558 562 583 600 h|557 562 606 617 f|583 605 606 632 f|582 583 606 627 h|582 582 587 608 f|529 562 581 587 h|519 525 552 552 h|494 525 535 538 f|527 534 556 560 f|545 553 556 559 h`;

const firstX = 3, stepX = 4;
let wicks = "", filled = "", hollow = "";
bars.split("|").forEach((bar, i) => {
  const [high, top, bottom, low, kind] = bar.split(" ");
  const x = firstX + stepX * i;
  wicks += `M${x + 0.5} ${high}V${low}`;
  const height = Math.max(1, bottom - top);
  if (kind === "f") filled += `M${x - 1} ${top}h3v${height}h-3z`;
  else hollow += `M${x - 0.5} ${+top + 0.5}h2v${height - 1}h-2z`;
});
document.getElementById("wicks").setAttribute("d", wicks);
document.getElementById("filled").setAttribute("d", filled);
document.getElementById("hollow").setAttribute("d", hollow);

const addItem = (list, text, cls) => {
  const li = document.createElement("li");
  const span = document.createElement("span");
  span.textContent = text;
  if (cls) li.className = cls;
  li.append(span);
  list.append(li);
};
const prices = document.getElementById("prices");
const lastPrice = 24550;
["24829", "24809", "24789", "24769", "24749", "24729", "24709", "24689", "24669", "24649", "24629", "24609", "24589", "24569", String(lastPrice), "24529", "24509", "24489", "24469", "24449", "24429"]
  .forEach(p => addItem(prices, p, p === String(lastPrice) ? "last" : ""));
const times = document.getElementById("times");
["4 Jul 2019", "4 Jul 18:20", "4 Jul 20:00", "4 Jul 21:20", "4 Jul 22:40", "5 Jul 10:10", "5 Jul 11:30", "5 Jul 12:50", "5 Jul 14:15", "5 Jul 15:35", "5 Jul 16:55", "5 Jul 18:15", "5 Jul 19:50", "5 Jul 21:10", "5 Jul 22:30", "8 Jul 10:00", "8 Jul 11:20", "8 Jul 12:40"]
  .forEach(t => addItem(times, t));

const swatches = document.getElementById("swatches");
["#000000", "#808080", "#800000", "#808000", "#008000", "#008080", "#000080", "#800080", "#808040", "#404080", "#0080ff", "#004080", "#8000ff", "#804000",
 "#ffffff", "#c0c0c0", "#ff0000", "#ffff00", "#00ff00", "#00ffff", "#0000ff", "#ff00ff", "#ffff80", "#00ff80", "#80ffff", "#8080ff", "#ff0080", "#ff8040"]
  .forEach(color => {
    const b = document.createElement("button");
    b.style.background = color;
    b.setAttribute("aria-label", color);
    swatches.append(b);
  });
```
